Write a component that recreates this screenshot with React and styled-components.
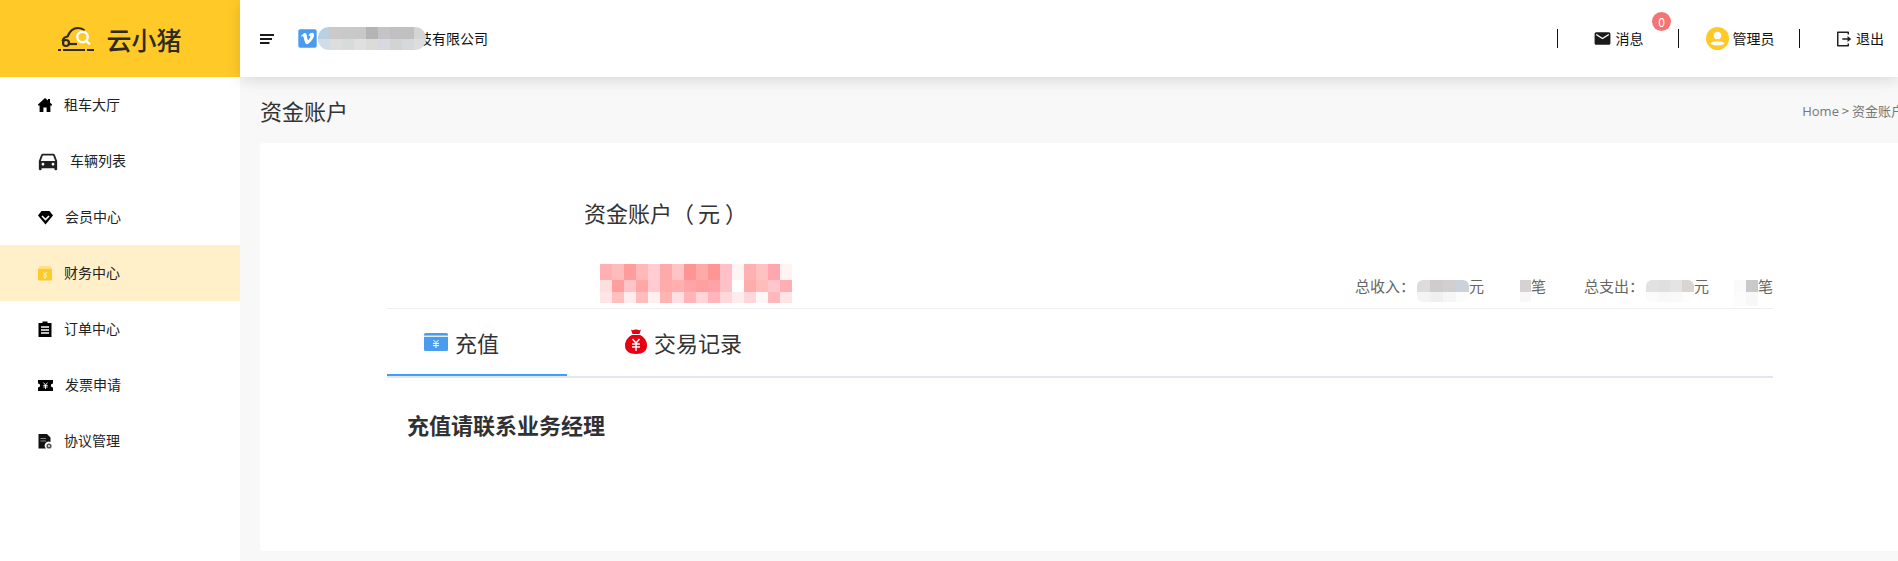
import styled, { createGlobalStyle } from "styled-components"
import { MdEmail } from "react-icons/md"
import { RiCarFill, RiLogoutBoxRLine } from "react-icons/ri"
import { FaVimeoSquare } from "react-icons/fa"

const GlobalStyle = createGlobalStyle`
    html, body {
        margin: 0;
        padding: 0;
        height: 100%;
        overflow: hidden;
    }
    body {
        font-family: "Noto Sans CJK SC", "Liberation Sans", sans-serif;
        color: #303133;
    }
`

function Logo() {
    return (
        <svg width="36" height="26" viewBox="0 0 36 26" fill="none" stroke="#2f2a1e" strokeWidth="2.2">
            <path d="M4.5 15 C5 12.5 7 11 9.5 10.5 C11.5 5.5 15 2 20 2 C23 2 25 3 26.5 4.5" />
            <circle cx="8" cy="17" r="3" />
            <path d="M11 18 H19" />
            <circle cx="24.5" cy="11" r="5.2" fill="#ffca28" stroke="#fff" strokeWidth="2.4" />
            <path d="M28.5 15 L32 18.5" stroke="#fff" strokeWidth="2.4" />
            <path d="M0 24 H3 M5 24 H27 M29 24 H36" />
        </svg>
    )
}

function MenuBars() {
    return (
        <svg width="14" height="10" viewBox="0 0 14 10" fill="#1a1a1a">
            <rect width="14" height="2" />
            <rect y="4" width="12" height="2" />
            <rect y="8" width="9.5" height="2" />
        </svg>
    )
}

function Home() {
    return (
        <svg width="14" height="14" viewBox="0 0 14 14">
            <path d="M7 0 L10 2.6 V1 H12 V4.4 L14 6.4 V7.4 H12.4 V14 H8.6 V9.4 H5.4 V14 H1.6 V7.4 H0 V6.4 Z" fill="#000" />
        </svg>
    )
}

function Diamond() {
    return (
        <svg width="15" height="15" viewBox="0 0 15 15">
            <path d="M3.5 1 H11.5 L15 5.5 L7.5 14.5 L0 5.5 Z" fill="#000" />
            <path d="M4 6 L7.5 9.5 L11 6" fill="none" stroke="#fff" strokeWidth="1.6" />
        </svg>
    )
}

function Wallet() {
    return (
        <svg width="14" height="15" viewBox="0 0 14 15">
            <path d="M1.5 0 H12.5 L13.5 2 H0.5 Z" fill="#ffe08a" />
            <rect y="2.5" width="14" height="12" rx="1" fill="#ffca28" />
            <path d="M5 6 L7 8 L9 6 M4.8 9 H9.2 M4.8 11 H9.2 M7 8 V13" fill="none" stroke="#fff3c4" strokeWidth="0.9" />
        </svg>
    )
}

function Clipboard() {
    return (
        <svg width="14" height="16" viewBox="0 0 14 16">
            <path d="M0.5 2 H4.5 V0.5 H9.5 V2 H13.5 V16 H0.5 Z" fill="#000" />
            <path d="M3 6 H11 M3 9 H11 M3 12 H11" stroke="#fff" strokeWidth="1.3" />
        </svg>
    )
}

function Ticket() {
    return (
        <svg width="15" height="11" viewBox="0 0 15 11">
            <path d="M0 0 H15 V3.4 A2 2 0 0 0 15 7.6 V11 H0 V7.6 A2 2 0 0 0 0 3.4 Z" fill="#000" />
            <path d="M5.5 2.6 L7.5 5 L9.5 2.6 M5.3 5.4 H9.7 M5.3 7 H9.7 M7.5 5 V9" fill="none" stroke="#fff" strokeWidth="0.9" />
        </svg>
    )
}

function Contract() {
    return (
        <svg width="14" height="15" viewBox="0 0 14 15">
            <path d="M0.5 0 H9 L12.5 3.5 V8 A4 4 0 0 0 8 14.5 H0.5 Z" fill="#111" />
            <path d="M2.5 4.5 H8 M2.5 7 H8" stroke="#888" strokeWidth="1.2" />
            <circle cx="11" cy="12" r="2.6" fill="#555" />
            <circle cx="11" cy="12" r="0.9" fill="#fff" />
        </svg>
    )
}

function Avatar() {
    return (
        <svg width="23" height="23" viewBox="0 0 23 23">
            <circle cx="11.5" cy="11.5" r="11.5" fill="#ffca28" />
            <circle cx="11.5" cy="8.5" r="3.8" fill="#fff" />
            <path d="M4.5 16.5 C6 13.5 17 13.5 18.5 16.5 C17 19 6 19 4.5 16.5 Z" fill="#fff" />
        </svg>
    )
}

function CardIcon() {
    return (
        <svg width="24" height="18" viewBox="0 0 24 18">
            <rect width="24" height="18" rx="1.5" fill="#4a9cec" />
            <rect y="2.6" width="24" height="1.2" fill="#fff" />
            <path d="M9.5 7 L12 9.6 L14.5 7 M9 10.4 H15 M9 12.6 H15 M12 9.6 V15" fill="none" stroke="#fff" strokeWidth="1" />
        </svg>
    )
}

function MoneyBag() {
    return (
        <svg width="22" height="25" viewBox="0 0 22 25">
            <path d="M6 0.5 C8 2 9 0.5 11 0.5 C13 0.5 14 2 16 0.5 L14.5 5 H7.5 Z" fill="#e60012" />
            <path d="M7 6 H15 C19 8 22 12 22 16.5 C22 22 18 25 11 25 C4 25 0 22 0 16.5 C0 12 3 8 7 6 Z" fill="#e60012" />
            <path d="M7.5 10 L11 14 L14.5 10 M7 15 H15 M7 18 H15 M11 14 V22" fill="none" stroke="#fff" strokeWidth="1.5" />
        </svg>
    )
}

// pixelated cover over the hidden values, one row of colours per row of cells
function Mosaic({ rows, cell, rowHeights, radius = 0 }) {
    const width = rows[0].length * cell
    const height = rowHeights.reduce((a, b) => a + b, 0)
    const clipId = `clip-${rows[0][0]}-${width}-${height}`
    return (
        <MosaicSvg width={width} height={height} shapeRendering="crispEdges">
            <defs>
                <clipPath id={clipId}>
                    <rect width={width} height={height} rx={radius} shapeRendering="auto" />
                </clipPath>
            </defs>
            <g clipPath={`url(#${clipId})`}>
                {rows.map((row, r) =>
                    row.map((color, c) => (
                        <rect
                            key={`${r}-${c}`}
                            x={c * cell}
                            y={rowHeights.slice(0, r).reduce((a, b) => a + b, 0)}
                            width={cell}
                            height={rowHeights[r]}
                            fill={`#${color}`}
                        />
                    ))
                )}
            </g>
        </MosaicSvg>
    )
}

const companyCover = [
    ["b8cfe4", "cbc9c9", "c9c9c9", "c8c8c8", "b4b4b4", "c5c3c6", "c0bfc2", "c0c0c0", "d4d4d4"],
    ["d0dde8", "dddddd", "d7dbdb", "e0e0e0", "dbdcd7", "d8d8e2", "d2d3d3", "d5d9dc", "dddddd"],
]

const amountCover = [
    ["ffb0b0", "ffbcbc", "ff9c9c", "ffb9b9", "ffcdd2", "ffaaaa", "ffc4c4", "ff9494", "ffa9a9", "ff9696", "ffc0c8", "fff5f5", "ffb0b0", "ffc2c2", "ffa6ae", "fff3f3"],
    ["ffdede", "ff9e9e", "ffc4c8", "ffa6a6", "ffcbd0", "ffabab", "ffafaf", "ffa4a8", "ff9f9f", "ffa3a8", "ffc0c6", "ffffff", "ffacac", "ffbcb8", "ffc6ce", "ffaeb2"],
    ["ffe5e5", "ffbfbf", "ffecec", "ffbcbc", "fff0f0", "ffb4b4", "ffdfe2", "ffb5b5", "ffd5d8", "ffb5bb", "ffd8dc", "ffecef", "ffd6da", "fff6f6", "ffb9bd", "ffe4e6"],
]

const incomeCover = [
    ["dcdcdc", "cfcccb", "d1cfcf", "ccd3d8"],
    ["f4f4f4", "f0f0f0", "f6f6f6", "fcfcfc"],
]
const incomeCountCover = [["d4d2d2"], ["f8f8f8"]]
const expenseCover = [
    ["e2e2e2", "dfdfdf", "e4e4e4", "d8d5d2"],
    ["fbfbfb", "f8f8f8", "f9f9f9", "fdfdfd"],
]
const expenseCountCover = [["fafafa", "c9c9c9"], ["fcfcfc", "f8f8f8"]]

const menu = [
    { label: "租车大厅", icon: <Home /> },
    { label: "车辆列表", icon: <RiCarFill size={22} style={{ margin: "0 -1px" }} /> },
    { label: "会员中心", icon: <Diamond /> },
    { label: "财务中心", icon: <Wallet />, active: true },
    { label: "订单中心", icon: <Clipboard /> },
    { label: "发票申请", icon: <Ticket /> },
    { label: "协议管理", icon: <Contract /> },
]

export default function App() {
    return (
        <Page>
            <GlobalStyle />
            <Sidebar>
                <Brand>
                    <Logo />
                    <BrandName>云小猪</BrandName>
                </Brand>
                {menu.map((item) => (
                    <MenuItem key={item.label} $active={item.active}>
                        {item.icon}
                        <MenuLabel>{item.label}</MenuLabel>
                    </MenuItem>
                ))}
            </Sidebar>
            <Main>
                <Header>
                    <MenuBars />
                    <Company>
                        <FaVimeoSquare size={21} color="#4a9cf0" />
                        <Mosaic rows={companyCover} cell={12} rowHeights={[12, 11]} radius={11} />
                        <CompanyName>技有限公司</CompanyName>
                    </Company>
                    <HeaderActions>
                        <Divider />
                        <HeaderAction $width={120}>
                            <MdEmail size={19} color="#1a1a1a" />
                            <ActionLabel>消息</ActionLabel>
                            <Badge>0</Badge>
                        </HeaderAction>
                        <Divider />
                        <HeaderAction $width={120} $indent={2}>
                            <Avatar />
                            <ActionLabel>管理员</ActionLabel>
                        </HeaderAction>
                        <Divider />
                        <HeaderAction $width={98} $indent={20}>
                            <RiLogoutBoxRLine size={18} color="#222" />
                            <ActionLabel>退出</ActionLabel>
                        </HeaderAction>
                    </HeaderActions>
                </Header>
                <Content>
                    <TitleRow>
                        <PageTitle>资金账户</PageTitle>
                        <Breadcrumb>
                            <Crumb>Home</Crumb> &gt; 资金账户
                        </Breadcrumb>
                    </TitleRow>
                    <Card>
                        <AccountTitle>
                            资金账户（<Unit>元</Unit>）
                        </AccountTitle>
                        <SummaryRow>
                            <Amount>
                                <Mosaic rows={amountCover} cell={12} rowHeights={[16, 12, 11]} />
                            </Amount>
                            <Stats>
                                <Stat $gap={36}>
                                    <StatLabel>总收入：</StatLabel>
                                    <Mosaic rows={incomeCover} cell={13} rowHeights={[12, 10]} radius={6} />
                                    元
                                </Stat>
                                <Stat $gap={38}>
                                    <Mosaic rows={incomeCountCover} cell={11} rowHeights={[12, 10]} />
                                    笔
                                </Stat>
                                <Stat $gap={25}>
                                    <StatLabel>总支出：</StatLabel>
                                    <Mosaic rows={expenseCover} cell={12} rowHeights={[12, 10]} radius={6} />
                                    元
                                </Stat>
                                <Stat>
                                    <Mosaic rows={expenseCountCover} cell={12} rowHeights={[12, 14]} />
                                    笔
                                </Stat>
                            </Stats>
                        </SummaryRow>
                        <Tabs>
                            <Tab $active $width={180} $indent={37}>
                                <CardIcon />
                                充值
                            </Tab>
                            <Tab $width={180} $indent={58}>
                                <MoneyBag />
                                交易记录
                            </Tab>
                        </Tabs>
                        <Notice>充值请联系业务经理</Notice>
                    </Card>
                </Content>
            </Main>
        </Page>
    )
}

const Page = styled.div`
    display: flex;
    height: 561px;
    overflow: hidden;
    background-color: #f8f8f8;
`

const MosaicSvg = styled.svg`
    position: relative;
    flex: none;
`

const Sidebar = styled.aside`
    flex: 0 0 240px;
    background-color: #fff;
`

const Brand = styled.div`
    display: flex;
    align-items: center;
    justify-content: center;
    gap: 12px;
    height: 77px;
    background-color: #ffca28;
`

const BrandName = styled.span`
    font-size: 25px;
    font-weight: 500;
    line-height: 30px;
    color: #2d2a22;
`

const MenuItem = styled.div`
    display: flex;
    align-items: center;
    gap: 12px;
    height: 56px;
    padding-left: 38px;
    font-size: 14px;
    color: #222;
    background-color: ${(p) => (p.$active ? "#fff0c9" : "transparent")};
`

const MenuLabel = styled.span`
    margin-top: -2px;
`

const Main = styled.main`
    flex: 1;
    min-width: 0;
    display: flex;
    flex-direction: column;
`

const Header = styled.header`
    position: relative;
    z-index: 1;
    display: flex;
    align-items: center;
    height: 77px;
    padding-left: 20px;
    background-color: #fff;
    box-shadow: 0 3px 14px rgba(0, 0, 0, 0.13);
`

const Company = styled.div`
    display: flex;
    align-items: center;
    margin-left: 23px;
    font-size: 14px;
    color: #111;
`

// the start of the name runs under the cover, as in the original page
const CompanyName = styled.span`
    margin-left: -8px;
    margin-top: -2px;
`

const HeaderActions = styled.div`
    display: flex;
    align-items: center;
    margin-left: auto;
    font-size: 14px;
    color: #111;
`

const Divider = styled.div`
    width: 1px;
    height: 19px;
    background-color: #111;
`

const HeaderAction = styled.div`
    position: relative;
    display: flex;
    align-items: center;
    justify-content: center;
    gap: 4px;
    box-sizing: border-box;
    width: ${(p) => p.$width}px;
    padding-left: ${(p) => p.$indent || 0}px;
`

const ActionLabel = styled.span`
    margin-top: -1px;
`

const Badge = styled.span`
    position: absolute;
    top: -17px;
    right: 7px;
    width: 19px;
    height: 19px;
    border-radius: 50%;
    background-color: #f57373;
    color: #fff;
    font-size: 12px;
    line-height: 19px;
    text-align: center;
`

const Content = styled.div`
    flex: 1;
    min-height: 0;
    display: flex;
    flex-direction: column;
    padding: 0 0 10px 20px;
`

const TitleRow = styled.div`
    display: flex;
    align-items: center;
    justify-content: space-between;
    height: 66px;
    margin-right: -6px;
    white-space: nowrap;
`

const PageTitle = styled.h1`
    margin: 0;
    font-size: 22px;
    font-weight: 400;
    color: #333;
`

const Breadcrumb = styled.div`
    font-size: 13px;
    color: #777;
`

const Crumb = styled.span`
    font-family: "Open Sans", sans-serif;
`

const Card = styled.section`
    flex: 1;
    padding: 54px 125px 0 127px;
    border-radius: 4px 0 0 4px;
    background-color: #fff;
`

const AccountTitle = styled.h2`
    margin: 0 0 0 197px;
    font-size: 22px;
    font-weight: 400;
    line-height: 30px;
    color: #333;
`

const Unit = styled.span`
    margin: 0 5px 0 4px;
`

const SummaryRow = styled.div`
    display: flex;
    align-items: flex-end;
    justify-content: space-between;
    height: 45px;
    margin-top: 36px;
    border-bottom: 1px solid #ebeef5;
`

const Amount = styled.div`
    display: flex;
    height: 44px;
    padding-top: 1px;
    margin-left: 213px;
`

const Stats = styled.div`
    display: flex;
    align-self: flex-start;
    padding-top: 14px;
    font-size: 15px;
    color: #666;
    svg {
        margin-top: 3px;
    }
`

const Stat = styled.div`
    display: flex;
    align-items: flex-start;
    height: 26px;
    line-height: 18px;
    margin-right: ${(p) => p.$gap || 0}px;
`

const StatLabel = styled.span`
    margin-right: 2px;
`

const Tabs = styled.div`
    display: flex;
    height: 67px;
    border-bottom: 2px solid #e4e7ed;
`

const Tab = styled.div`
    display: flex;
    align-items: center;
    gap: 7px;
    box-sizing: border-box;
    width: ${(p) => p.$width}px;
    height: 67px;
    padding-left: ${(p) => p.$indent}px;
    font-size: 22px;
    color: #333;
    border-bottom: 2px solid ${(p) => (p.$active ? "#409eff" : "transparent")};
`

const Notice = styled.h3`
    margin: 31px 0 0 20px;
    font-size: 22px;
    font-weight: 700;
    line-height: 30px;
    color: #303133;
`
